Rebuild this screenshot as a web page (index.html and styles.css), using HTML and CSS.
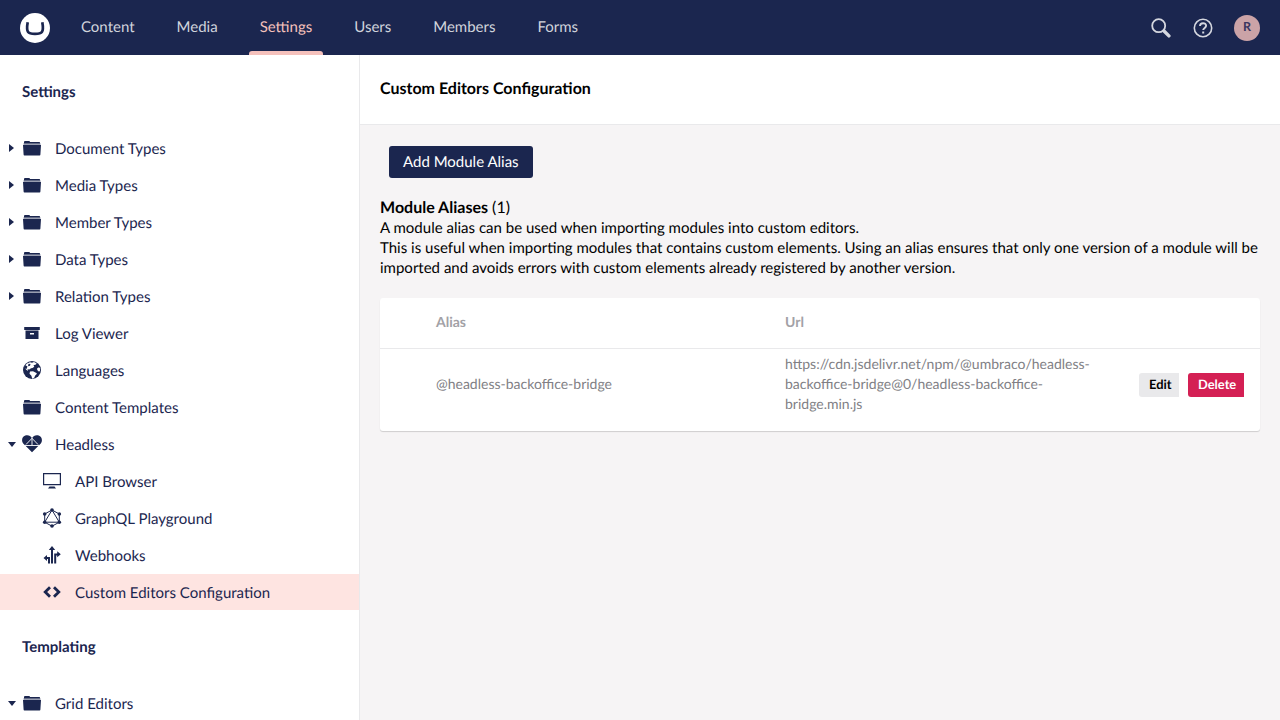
FILE: index.html
```html
<!DOCTYPE html>
<html lang="en">
<head>
<meta charset="utf-8">
<title>Custom Editors Configuration</title>
<link rel="stylesheet" href="styles.css">
</head>
<body>
<svg class="defs" width="0" height="0">
  <symbol id="folder" viewBox="0 0 20 20">
    <path fill="currentColor" d="M2 5V4q0-1 1-1h4q1 0 1 1h9.500q.5 0 .5 1v.4H2z"/>
    <path fill="currentColor" opacity=".45" d="M1.500 5.200h17v2h-17z"/>
    <path fill="currentColor" d="M1 7h18l-.6 9.500q0 1-.8 1H2.400q-.8 0-.8-1z"/>
  </symbol>
  <symbol id="box" viewBox="0 0 20 20">
    <path fill="currentColor" d="M2.200 4h15.600v3H2.200z"/>
    <path fill="currentColor" opacity=".5" d="M3.500 7h13v1h-13z"/>
    <path fill="currentColor" fill-rule="evenodd" d="M3.500 8h13v8h-13zM8 10v1.500h4V10z"/>
  </symbol>
  <symbol id="globe" viewBox="0 0 20 20">
    <circle cx="10" cy="10" r="9" fill="currentColor"/>
    <path fill="#fff" d="M5 3.500l3-1.200 2 .5 2-.8 2.500 1.200-.5 1.300-2.500.7.800 1.500-1.800 1.300-1.500.2-1.700 1.200-1.800-.2.500 1.800L4 9.500 2.600 7 3.500 5z"/>
    <path fill="currentColor" d="M6.500 3.800l2 .3-.5 1.600-2 .6zM3 5l2.500 1.500L4.500 9 2 8z"/>
    <path fill="#fff" d="M8 11.500l3-.3 3 1.600 1 1-1.800 1.700-1 2.300-2 1-.8-3-1.900-2z"/>
    <path fill="#fff" d="M15.200 8.300l1.800-1 1.200 1.300-.3 2.600-1.200.4-1.500-1.600z"/>
  </symbol>
  <symbol id="heart" viewBox="0 0 20 20">
    <path fill="currentColor" d="M10 18.300L1.200 9.500C-1 6.800 0 2.200 4 1.300c2.500-.5 4.800.5 6 3 1.200-2.500 3.500-3.500 6-3 4 .9 5 5.500 2.800 8.200z"/>
    <path stroke="#fff" stroke-width=".9" fill="none" d="M2.500 11.500h15M4 10.500l6-6.200 6 6.200M10 4v7"/>
  </symbol>
  <symbol id="monitor" viewBox="0 0 20 20">
    <path fill="none" stroke="currentColor" stroke-width="1.200" d="M1.600 2.600h16.800v11H1.600z"/>
    <path fill="currentColor" d="M7.500 15.500h5l1.500 2H6z"/>
  </symbol>
  <symbol id="graphql" viewBox="0 0 20 20">
    <path fill="none" stroke="currentColor" d="M10 2l7.300 4v8.200L10 18.200l-7.300-4V6zM10 2L2.700 14.200h14.600z"/>
    <g fill="currentColor"><circle cx="10" cy="2" r="1.800"/><circle cx="17.300" cy="6" r="1.800"/><circle cx="17.300" cy="14.200" r="1.800"/><circle cx="10" cy="18" r="1.800"/><circle cx="2.700" cy="14.200" r="1.800"/><circle cx="2.700" cy="6" r="1.800"/></g>
  </symbol>
  <symbol id="hooks" viewBox="0 0 20 20">
    <path fill="none" stroke="currentColor" stroke-width="2" d="M10 18.500V4M7 18.500V13H4M13.200 18.500V9.500H16"/>
    <path fill="currentColor" d="M10 1l3.200 4H6.800zM1.500 13l3.500-3v6zM18.800 9.300l-3.600-3v6z"/>
  </symbol>
  <symbol id="code" viewBox="0 0 20 20">
    <path fill="none" stroke="currentColor" stroke-width="2.800" d="M8 5.200L3.200 10 8 14.800M12 5.200l4.800 4.800-4.800 4.800"/>
  </symbol>
</svg>

<header class="topbar">
  <svg class="logo" viewBox="0 0 30 30"><circle cx="15" cy="15" r="15" fill="#fff"/><path fill="none" stroke="#1b264f" stroke-width="2.700" d="M7.700 9.200c-.9 5-.7 8.300.4 9.800.9 1.300 3.200 1.800 6.900 1.800s6-.5 6.900-1.800c1.100-1.500 1.300-4.800.4-9.800"/></svg>
  <nav class="nav">
    <a class="nav-item">Content</a><a class="nav-item">Media</a><a class="nav-item active">Settings</a><a class="nav-item">Users</a><a class="nav-item">Members</a><a class="nav-item">Forms</a>
  </nav>
  <div class="tools">
    <svg class="tool" viewBox="0 0 20 20"><circle cx="7.700" cy="7.700" r="6.500" fill="none" stroke="#d5d7df" stroke-width="1.800"/><path d="M13 13l4.900 4.900" stroke="#d5d7df" stroke-width="3.400" stroke-linecap="round"/></svg>
    <svg class="tool" viewBox="0 0 20 20"><circle cx="10" cy="10" r="8.700" fill="none" stroke="#d5d7df" stroke-width="1.600"/><path d="M7 8c0-3.700 6.100-3.700 6.100-.2 0 2-2.900 2.200-2.900 4.300" fill="none" stroke="#d5d7df" stroke-width="1.900"/><path d="M9.200 13.500h2v2h-2z" fill="#d5d7df"/></svg>
    <span class="avatar">R</span>
  </div>
</header>

<div class="body">
  <aside class="sidebar">
    <h2 class="group">Settings</h2>
    <ul class="tree">
      <li class="row"><i class="caret"></i><svg class="icon"><use href="#folder"/></svg><span>Document Types</span></li>
      <li class="row"><i class="caret"></i><svg class="icon"><use href="#folder"/></svg><span>Media Types</span></li>
      <li class="row"><i class="caret"></i><svg class="icon"><use href="#folder"/></svg><span>Member Types</span></li>
      <li class="row"><i class="caret"></i><svg class="icon"><use href="#folder"/></svg><span>Data Types</span></li>
      <li class="row"><i class="caret"></i><svg class="icon"><use href="#folder"/></svg><span>Relation Types</span></li>
      <li class="row"><i class="caret none"></i><svg class="icon"><use href="#box"/></svg><span>Log Viewer</span></li>
      <li class="row"><i class="caret none"></i><svg class="icon"><use href="#globe"/></svg><span>Languages</span></li>
      <li class="row"><i class="caret none"></i><svg class="icon"><use href="#folder"/></svg><span>Content Templates</span></li>
      <li class="row"><i class="caret open"></i><svg class="icon"><use href="#heart"/></svg><span>Headless</span></li>
      <li class="row child"><svg class="icon"><use href="#monitor"/></svg><span>API Browser</span></li>
      <li class="row child"><svg class="icon"><use href="#graphql"/></svg><span>GraphQL Playground</span></li>
      <li class="row child"><svg class="icon"><use href="#hooks"/></svg><span>Webhooks</span></li>
      <li class="row child selected"><svg class="icon"><use href="#code"/></svg><span>Custom Editors Configuration</span></li>
    </ul>
    <h2 class="group">Templating</h2>
    <ul class="tree">
      <li class="row"><i class="caret open"></i><svg class="icon"><use href="#folder"/></svg><span>Grid Editors</span></li>
    </ul>
  </aside>

  <main class="main">
    <div class="heading"><h1>Custom Editors Configuration</h1></div>
    <div class="content">
      <button class="add">Add Module Alias</button>
      <div class="intro">
        <div class="count"><b>Module Aliases</b> (1)</div>
        <p>A module alias can be used when importing modules into custom editors.<br>This is useful when importing modules that contains custom elements. Using an alias ensures that only one version of a module will be imported and avoids errors with custom elements already registered by another version.</p>
      </div>
      <div class="table">
        <div class="tr th"><span>Alias</span><span>Url</span><span></span></div>
        <div class="tr td"><span>@headless-backoffice-bridge</span><span>https://cdn.jsdelivr.net/npm/@umbraco/headless-<br>backoffice-bridge@0/headless-backoffice-<br>bridge.min.js</span><div class="actions"><button class="btn">Edit</button><button class="btn danger">Delete</button></div></div>
      </div>
    </div>
  </main>
</div>
</body>
</html>
```
FILE: styles.css
```css
* { box-sizing: border-box; }
body {
  margin: 0;
  width: 1280px;
  height: 720px;
  overflow: hidden;
  font: 15.030px/20px Lato, "Liberation Sans", sans-serif;
  text-rendering: geometricPrecision;
  color: #000;
}
h1, h2, p, ul { margin: 0; padding: 0; }
button { border: 0; font-family: inherit; text-rendering: inherit; }
.defs { position: absolute; }

.topbar {
  height: 55px;
  display: flex;
  align-items: center;
  padding: 0 20px;
  background: #1b264f;
}
.logo { width: 30px; height: 30px; }
.nav { display: flex; height: 55px; margin-left: 10px; font-size: 15px; }
.nav-item {
  position: relative;
  padding: 17px 21px 0;
  color: #d1d4dc;
}
.nav-item.active { color: #f5c1bc; }
.nav-item.active::after {
  content: "";
  position: absolute;
  left: 10px;
  right: 10px;
  bottom: 0;
  height: 4px;
  border-radius: 3px 3px 0 0;
  background: #f5c1bc;
}
.tools { display: flex; align-items: center; gap: 21px; margin-left: auto; }
.tool { width: 20px; height: 20px; }
.tool:first-child { margin-right: 1px; }
.avatar {
  width: 26px;
  height: 26px;
  border-radius: 50%;
  background: #cba3a7;
  color: #3a3660;
  font-size: 12.500px;
  font-weight: 700;
  line-height: 24px;
  text-align: center;
}

.body { display: flex; height: 665px; }
.sidebar {
  flex: 0 0 360px;
  border-right: 1px solid #e9e9eb;
  background: #fff;
  color: #1b264f;
  overflow: hidden;
}
.group {
  height: 75px;
  padding: 27px 0 0 22px;
  font-size: 15px;
  line-height: 20px;
  font-weight: 700;
}
.tree { list-style: none; }
.tree + .group { height: 74px; padding-top: 26px; }
.row {
  display: flex;
  align-items: center;
  height: 36px;
  margin-bottom: 1px;
  padding-left: 8px;
}
.row.child { padding-left: 42px; }
.row.selected { background: #fee4e1; }
.caret {
  width: 14px;
  height: 8px;
  display: flex;
  align-items: center;
}
.caret::before {
  content: "";
  border: 4px solid transparent;
  border-left: 5px solid #1b264f;
  border-right: 0;
  margin-left: 1px;
}
.caret.none::before { display: none; }
.caret.open::before {
  margin: 0;
  border: 4px solid transparent;
  border-top: 5px solid #1b264f;
  border-bottom: 0;
}
.icon { width: 20px; height: 20px; margin-right: 13px; }
.row span { padding-top: 1px; }

.main { flex: 1; background: #f6f4f5; }
.heading {
  height: 70px;
  padding: 24px 20px 0;
  border-bottom: 1px solid #e9e9eb;
  background: #fff;
}
h1 { font-size: 16px; line-height: 20px; font-weight: 700; }
.content { padding: 21px 20px; }
.add {
  display: block;
  height: 32px;
  margin-left: 9px;
  padding: 0 14px;
  border-radius: 3px;
  background: #1b264f;
  color: #fff;
  font-size: 15px;
  line-height: 30px;
}
.intro { margin-top: 20px; }
.count { font-size: 16.030px; }
.table {
  margin-top: 20px;
  border-radius: 3px;
  background: #fff;
  box-shadow: 0 1px 1px rgba(0, 0, 0, .16);
}
.tr {
  display: grid;
  grid-template-columns: 349px 1fr auto;
  align-items: center;
  padding: 0 16px 0 56px;
}
.th {
  height: 51px;
  padding-bottom: 3px;
  border-bottom: 1px solid #e9e9eb;
  color: #a2a1a6;
  font-size: 14px;
  font-weight: 700;
}
.td { height: 82px; padding-bottom: 10px; color: #817f85; font-size: 14px; }
.td > span { margin-top: -2px; }
.actions { display: flex; gap: 9px; }
.btn {
  width: 40px;
  height: 24px;
  padding: 0 0 2px 10px;
  border-radius: 3px 0 0 3px;
  background: #e9e9eb;
  color: #000;
  font-size: 12.900px;
  font-weight: 700;
  line-height: 22px;
  text-align: left;
}
.btn.danger { width: 56px; background: #d42054; color: #fff; }
```
